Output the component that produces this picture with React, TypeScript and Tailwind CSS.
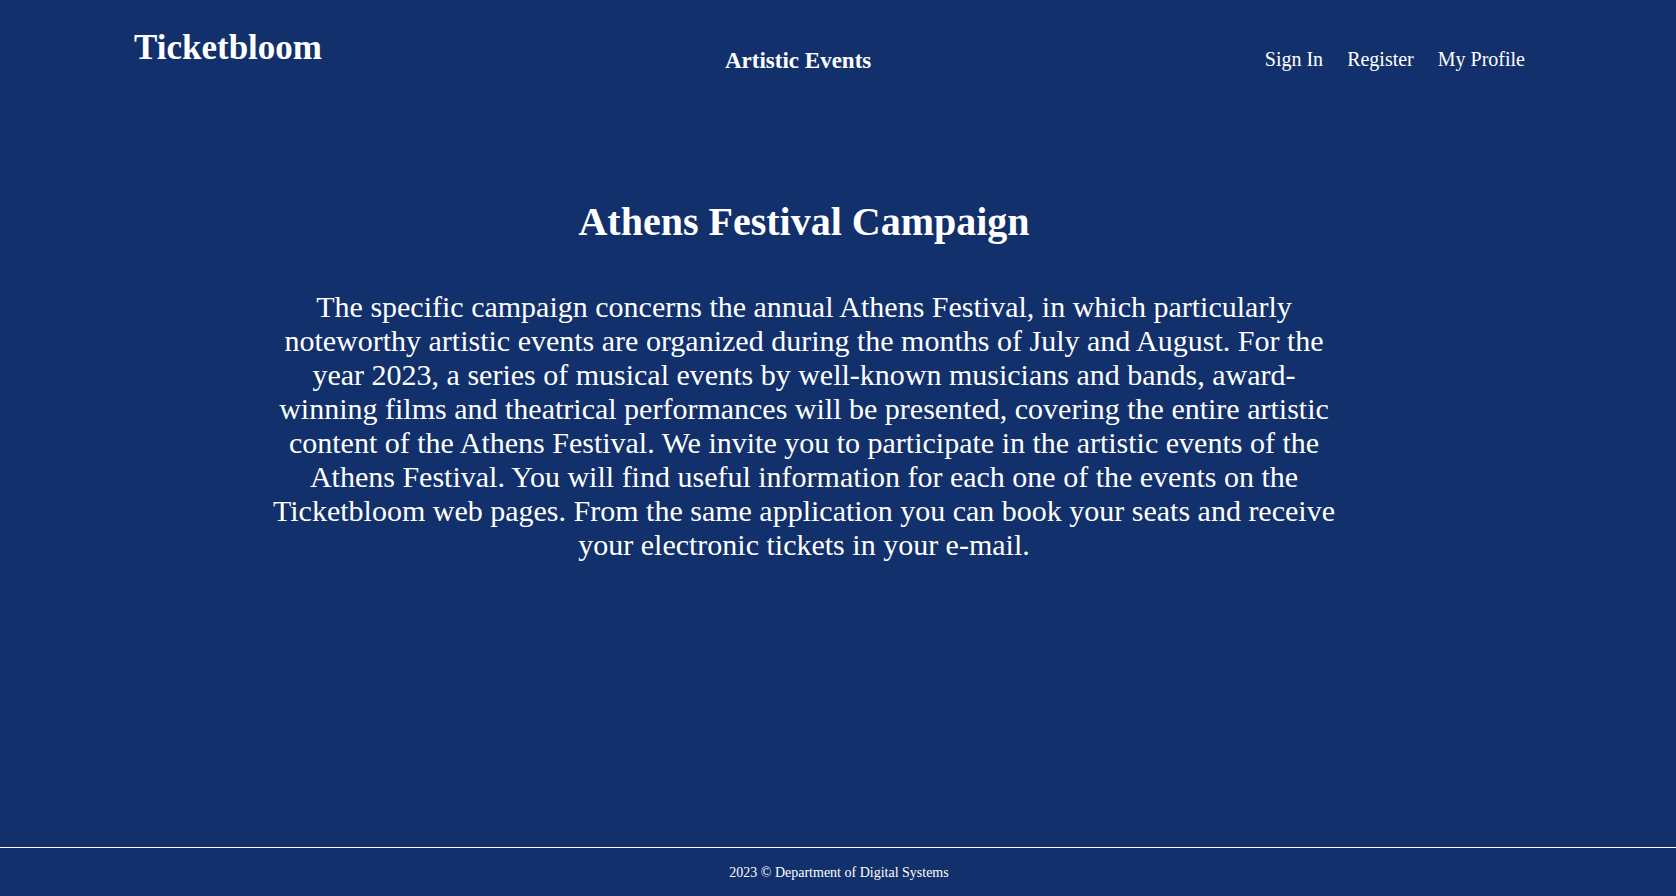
import React from "react";

export default function App() {
  return (
    <div
      className="min-h-screen flex flex-col bg-[#12306b] text-white"
      style={{ fontFamily: '"Liberation Serif", "Times New Roman", serif' }}
    >
      <header className="flex items-start pl-[134px] pr-[151px]">
        <h1 className="mt-[28px] text-[35px] font-bold leading-[40px]">Ticketbloom</h1>
        <div className="mt-[48px] ml-[403px] text-[23px] font-bold leading-[26px]">Artistic Events</div>
        <nav className="ml-auto mt-[48px] flex gap-[24px] text-[20px] leading-[23px]">
          <a href="#">Sign In</a>
          <a href="#">Register</a>
          <a href="#">My Profile</a>
        </nav>
      </header>
      <main className="flex-1 flex flex-col">
        <div className="ml-[269px] w-[1070px] pt-[124px] text-center">
          <h2 className="text-[40px] font-bold leading-[48px]">Athens Festival Campaign</h2>
          <p className="mt-[44px] text-[30px] leading-[34px]">
            The specific campaign concerns the annual Athens Festival, in which particularly noteworthy artistic events are organized during the months of July and August. For the year 2023, a series of musical events by well-known musicians and bands, award-winning films and theatrical performances will be presented, covering the entire artistic content of the Athens Festival. We invite you to participate in the artistic events of the Athens Festival. You will find useful information for each one of the events on the Ticketbloom web pages. From the same application you can book your seats and receive your electronic tickets in your e-mail.
          </p>
        </div>
      </main>
      <footer className="border-t border-white pt-[17px] pb-[15px] pl-[2px] text-center text-[14px] leading-[16px]">
        2023 © Department of Digital Systems
      </footer>
    </div>
  );
}
